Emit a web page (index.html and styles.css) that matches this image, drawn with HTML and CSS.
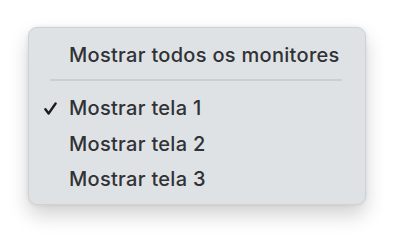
FILE: index.html
```html
<!DOCTYPE html>
<html lang="pt">
<head>
<meta charset="utf-8">
<link rel="stylesheet" href="styles.css">
</head>
<body>
<div class="menu">
  <div class="item"><span class="check"></span><span class="label">Mostrar todos os monitores</span></div>
  <div class="sep"></div>
  <div class="item"><span class="check"><svg width="13" height="13" viewBox="0 0 13 13"><path d="M1.4 7.2 L4.6 11.5 L11.6 1.5" fill="none" stroke="#1d1d1f" stroke-width="2.4" stroke-linecap="round" stroke-linejoin="round"/></svg></span><span class="label">Mostrar tela 1</span></div>
  <div class="item"><span class="check"></span><span class="label">Mostrar tela 2</span></div>
  <div class="item"><span class="check"></span><span class="label">Mostrar tela 3</span></div>
</div>
</body>
</html>
```
FILE: styles.css
```css
html, body {
  margin: 0;
  padding: 0;
  background: #ffffff;
}
body {
  box-sizing: border-box;
  min-height: 238px;
  padding: 27px 0 0 28px;
  font-family: Inter, "Liberation Sans", sans-serif;
}
.menu {
  box-sizing: border-box;
  width: 338px;
  height: 178px;
  background: #dfe2e5;
  border: 1px solid #cfd2d5;
  border-radius: 9px;
  box-shadow: 0 10px 20px rgba(0, 0, 0, 0.18), 0 0 4px rgba(0, 0, 0, 0.08);
  padding: 9px 0 0 0;
}
.item {
  display: flex;
  align-items: center;
  height: 35.5px;
  font-size: 20px;
  font-weight: 500;
  letter-spacing: 0.3px;
  color: #303235;
}
.check {
  width: 40px;
  display: flex;
  justify-content: flex-end;
  padding-right: 12px;
  box-sizing: border-box;
}
.sep {
  height: 2px;
  background: #cdd0d3;
  margin: 6px 23px 10px 21px;
}
```
